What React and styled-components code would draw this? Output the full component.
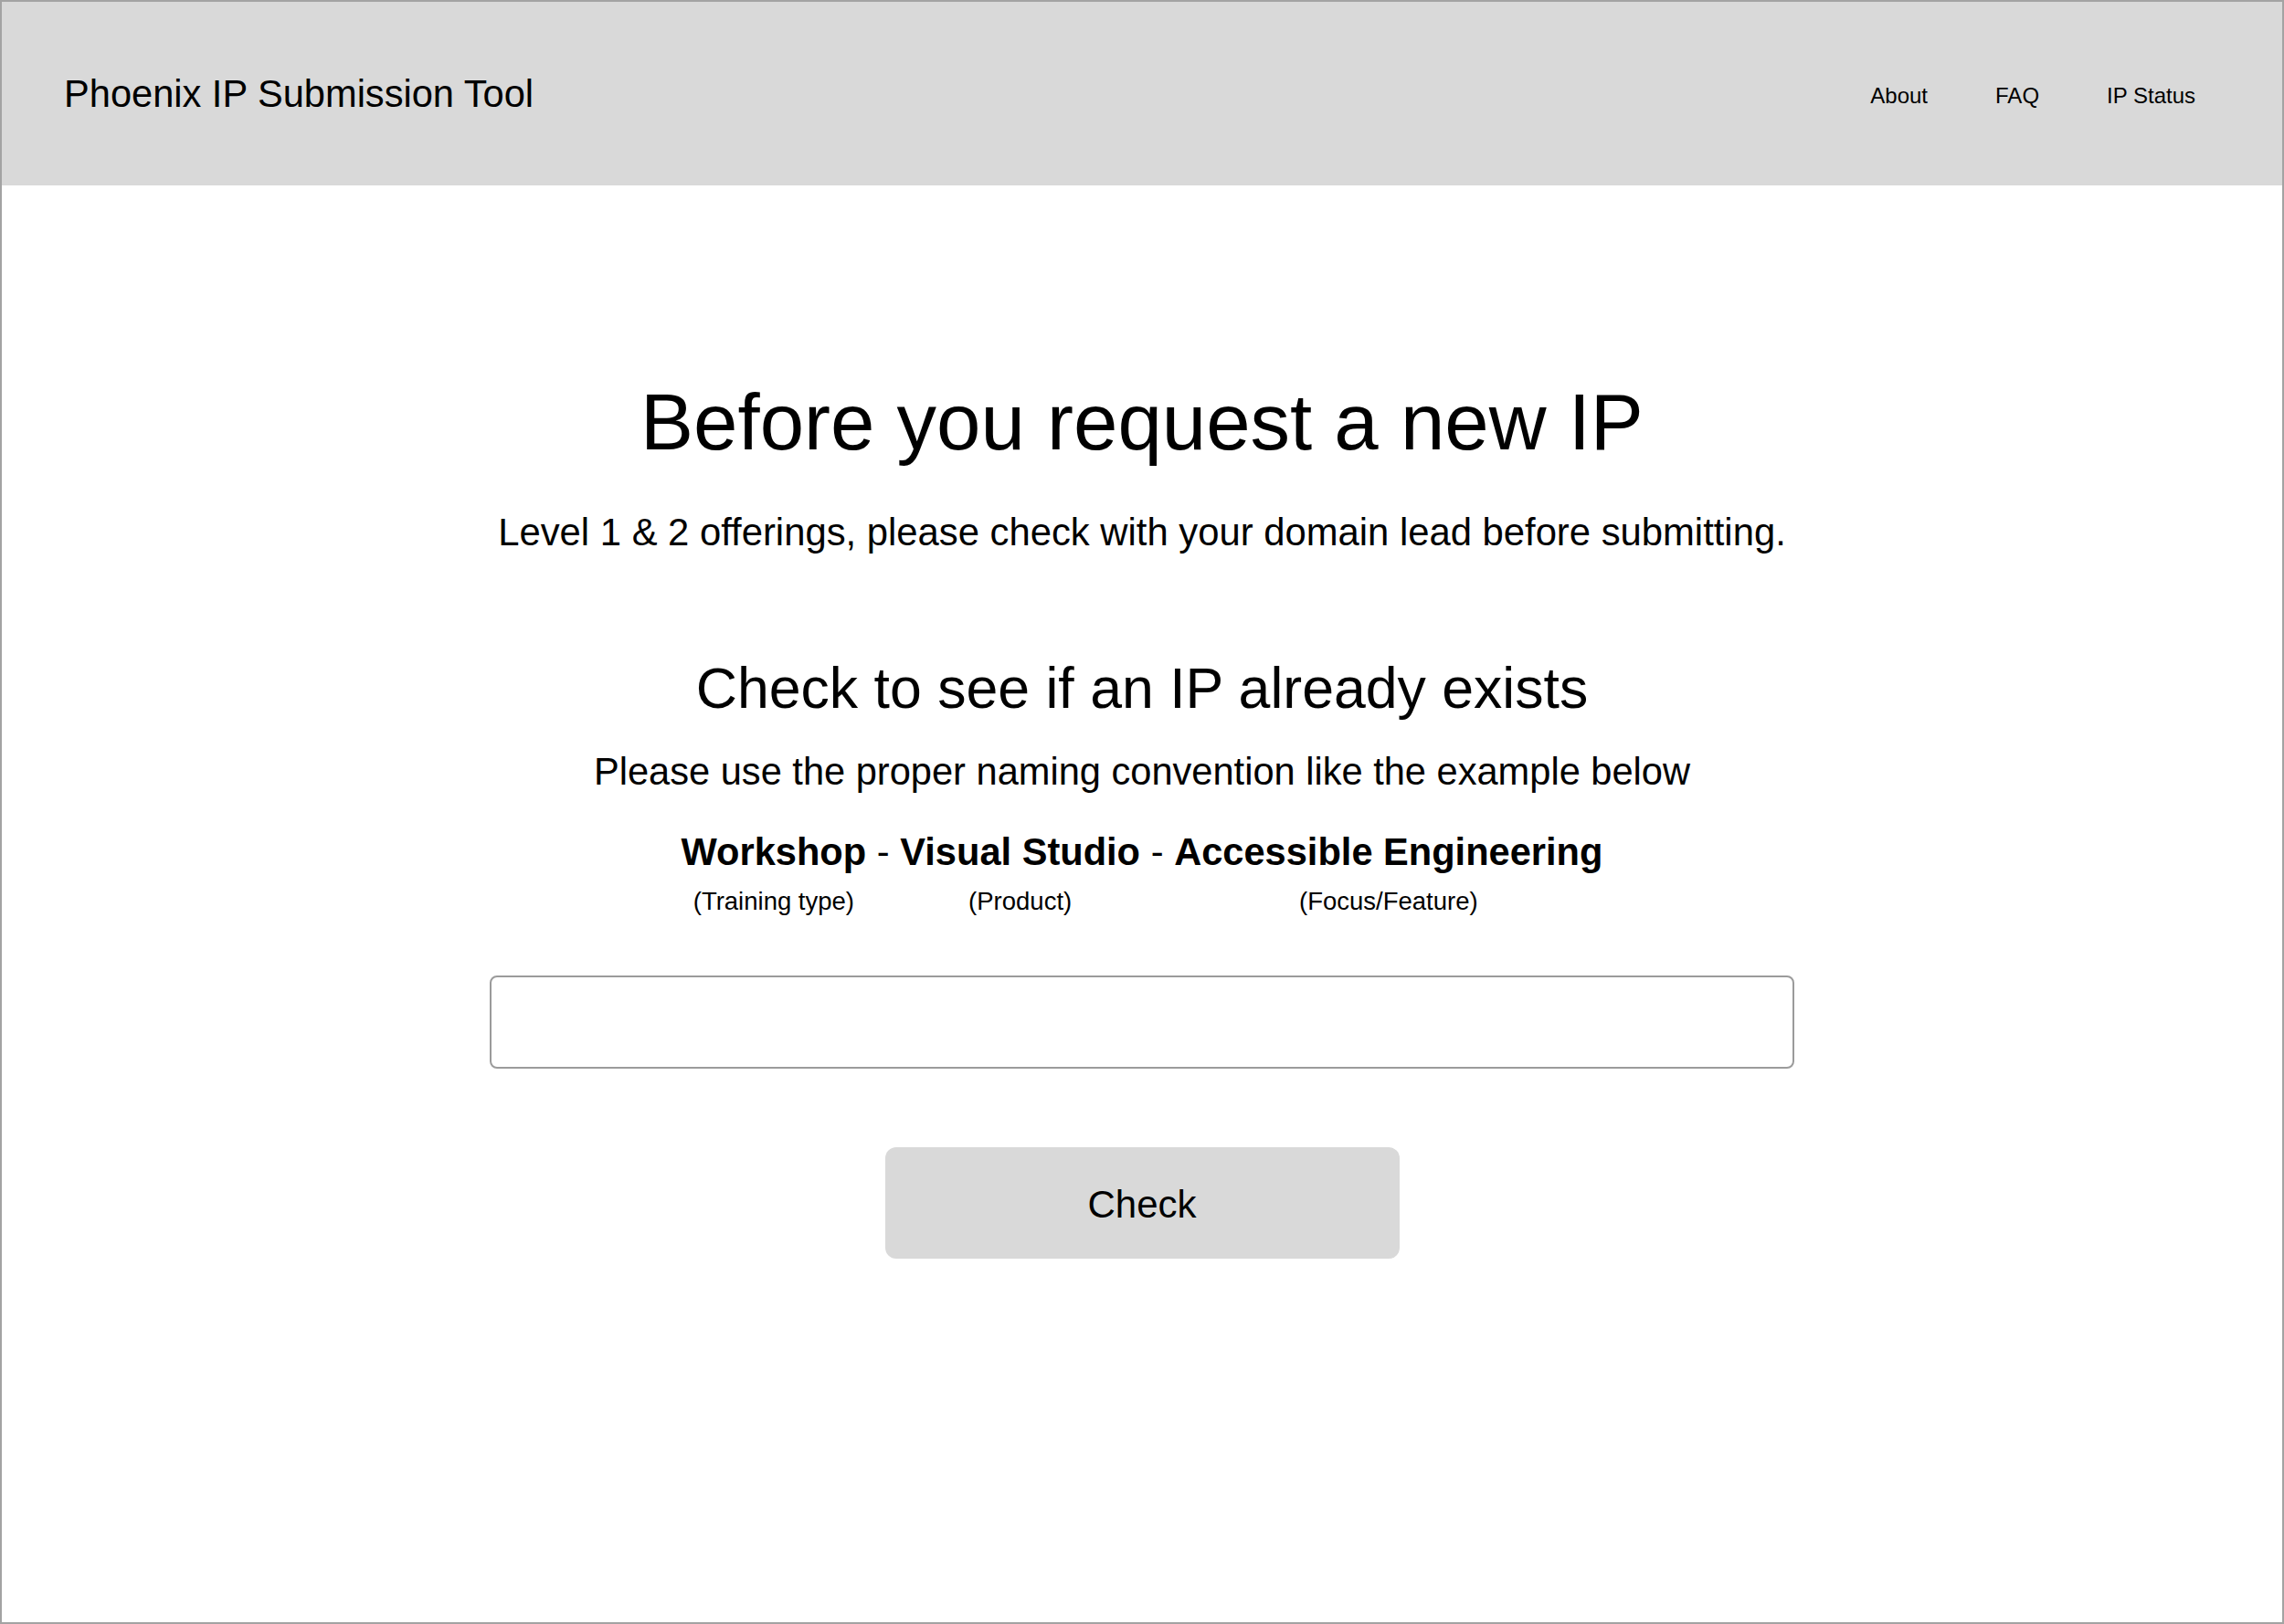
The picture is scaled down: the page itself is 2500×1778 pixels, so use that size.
import styled, { createGlobalStyle } from 'styled-components';

const GlobalStyle = createGlobalStyle`
  html, body {
    margin: 0;
    padding: 0;
    background: #fff;
  }

  body {
    font-family: 'Liberation Sans', Arial, Helvetica, sans-serif;
    color: #000;
  }

  * {
    box-sizing: border-box;
  }
`;

const segments = [
  { term: 'Workshop', hint: '(Training type)' },
  { term: 'Visual Studio', hint: '(Product)' },
  { term: 'Accessible Engineering', hint: '(Focus/Feature)' },
];

export default function App() {
  return (
    <Frame>
      <GlobalStyle />
      <Header>
        <Brand>Phoenix IP Submission Tool</Brand>
        <Nav>
          <NavLink href="#about">About</NavLink>
          <NavLink href="#faq">FAQ</NavLink>
          <NavLink href="#status">IP Status</NavLink>
        </Nav>
      </Header>
      <Main>
        <Title>Before you request a new IP</Title>
        <Lead>
          Level 1 &amp; 2 offerings, please check with your domain lead before
          submitting.
        </Lead>
        <Subtitle>Check to see if an IP already exists</Subtitle>
        <Hint>Please use the proper naming convention like the example below</Hint>
        <Example>
          {segments.map((s, i) => (
            <Segment key={s.term}>
              {i > 0 && <Dash>-</Dash>}
              <Part>
                <Term>{s.term}</Term>
                <PartLabel>{s.hint}</PartLabel>
              </Part>
            </Segment>
          ))}
        </Example>
        <NameInput type="text" aria-label="IP name" />
        <CheckButton type="button">Check</CheckButton>
      </Main>
    </Frame>
  );
}

const Frame = styled.div`
  height: 100vh;
  border: 2px solid #a3a3a3;
  display: flex;
  flex-direction: column;
  overflow: hidden;
`;

const Header = styled.header`
  height: 201px;
  flex-shrink: 0;
  background: #d9d9d9;
  display: flex;
  align-items: center;
  justify-content: space-between;
  padding: 0 95px 0 68px;
`;

const Brand = styled.div`
  font-size: 41.6px;
  line-height: 48px;
`;

const Nav = styled.nav`
  display: flex;
  gap: 74px;
  padding-top: 4px;
`;

const NavLink = styled.a`
  font-size: 24px;
  line-height: 30px;
  color: #000;
  text-decoration: none;
`;

const Main = styled.main`
  display: flex;
  flex-direction: column;
  align-items: center;
  padding-top: 209px;
  text-align: center;
`;

const Title = styled.h1`
  margin: 0;
  font-size: 87px;
  font-weight: 400;
  line-height: 100px;
`;

const Lead = styled.p`
  margin: 46px 0 0;
  font-size: 41.8px;
  line-height: 50px;
`;

const Subtitle = styled.h2`
  margin: 109px 0 0;
  font-size: 62.6px;
  font-weight: 400;
  line-height: 72px;
`;

const Hint = styled.p`
  margin: 31px 0 0;
  font-size: 41.6px;
  line-height: 50px;
`;

const Example = styled.div`
  margin-top: 38px;
  display: flex;
  align-items: flex-start;
`;

const Segment = styled.div`
  display: flex;
  align-items: flex-start;
`;

const Part = styled.div`
  display: flex;
  flex-direction: column;
  align-items: center;
`;

const Term = styled.span`
  font-size: 41.6px;
  font-weight: 700;
  line-height: 50px;
  white-space: nowrap;
`;

const Dash = styled.span`
  font-size: 41.6px;
  line-height: 50px;
  margin: 0 0.28em;
`;

const PartLabel = styled.span`
  margin-top: 13px;
  font-size: 27.5px;
  line-height: 32px;
  white-space: nowrap;
`;

const NameInput = styled.input`
  margin-top: 65px;
  width: 1428px;
  height: 102px;
  border: 2px solid #9b9b9b;
  border-radius: 8px;
  background: #fff;
  font: inherit;
  font-size: 36px;
  padding: 0 24px;
  outline: none;
`;

const CheckButton = styled.button`
  margin-top: 86px;
  width: 563px;
  height: 122px;
  padding-top: 5px;
  border: none;
  border-radius: 12px;
  background: #d9d9d9;
  font-family: inherit;
  font-size: 42px;
  color: #000;
  cursor: pointer;
`;
